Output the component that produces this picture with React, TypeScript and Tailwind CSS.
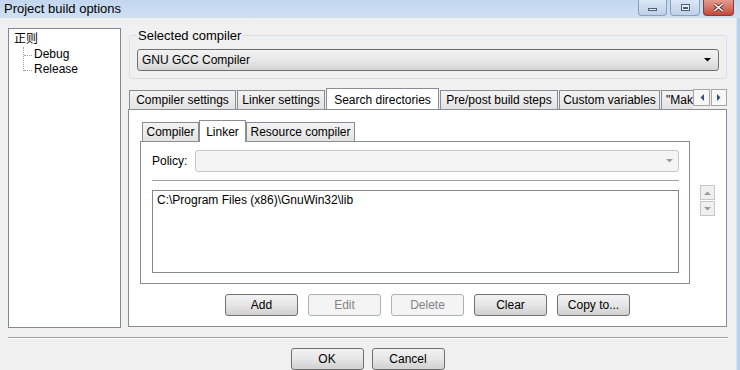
const font = { fontFamily: "'Liberation Sans', Arial, sans-serif" };

const WinButton = ({
  label,
  disabled,
}: {
  label: string;
  disabled?: boolean;
}) => (
  <button
    className={
      disabled
        ? "w-[73px] h-[22px] rounded-[3px] border border-[#adb2b5] bg-[#f4f4f4] text-[#838383] text-[12px] leading-none"
        : "w-[73px] h-[22px] rounded-[3px] border border-[#707070] bg-gradient-to-b from-[#f2f2f2] via-[#e6e6e6] to-[#d0d0d0] text-black text-[12px] leading-none"
    }
  >
    {label}
  </button>
);

const outerTabs = [
  { name: "Compiler settings", w: "w-[107px]" },
  { name: "Linker settings", w: "w-[88px]" },
  { name: "Search directories", w: "w-[113px]", active: true },
  { name: "Pre/post build steps", w: "w-[118px]" },
  { name: "Custom variables", w: "w-[101px]" },
  { name: '"Make" commands', w: "w-[110px]" },
];

const innerTabs = [
  { name: "Compiler", w: "w-[57px]" },
  { name: "Linker", w: "w-[47px]", active: true },
  { name: "Resource compiler", w: "w-[109px]" },
];

const Tab = ({
  name,
  w,
  active,
}: {
  name: string;
  w: string;
  active?: boolean;
}) => (
  <div
    className={
      active
        ? `${w} h-[22px] -mb-px relative z-10 shrink-0 bg-white border border-b-0 border-[#898c95] flex items-start pt-[2px] justify-center text-[12px] whitespace-nowrap`
        : `${w} h-[19px] shrink-0 bg-gradient-to-b from-[#f3f3f3] to-[#e3e3e3] border border-b-0 border-[#898c95] flex items-center justify-center text-[12px] whitespace-nowrap`
    }
  >
    {name}
  </div>
);

const Arrow = ({ dir, color }: { dir: "up" | "down" | "left" | "right"; color: string }) => {
  const pts = {
    up: "0,4 3.5,0.5 7,4",
    down: "0,0 7,0 3.5,3.5",
    left: "4,0 4,7 0.5,3.5",
    right: "0,0 0,7 3.5,3.5",
  }[dir];
  const vertical = dir === "up" || dir === "down";
  return (
    <svg width={vertical ? 7 : 4} height={vertical ? 4 : 7} viewBox={vertical ? "0 0 7 4" : "0 0 4 7"}>
      <polygon points={pts} fill={color} />
    </svg>
  );
};

export default function App() {
  return (
    <div
      className="w-[740px] h-[370px] overflow-hidden flex flex-col bg-[#f0f0f0] text-black"
      style={font}
    >
      {/* title bar */}
      <div className="h-[18px] shrink-0 flex items-start bg-gradient-to-b from-[#c2d7ee] to-[#cfe0f3]">
        <div className="pl-[4px] pt-[1px] text-[13px] leading-[16px] text-black">
          Project build options
        </div>
        <div className="ml-auto flex gap-[3px] mr-[6px]">
          <div className="w-[29px] h-[16px] rounded-b-[4px] border border-t-0 border-[#8aa1bd] bg-gradient-to-b from-[#dbe7f4] to-[#bdd1e8] flex items-center justify-center">
            <div className="w-[9px] h-[3px] mt-[3px] border border-[#4d5f78] bg-[#e9eef4]" />
          </div>
          <div className="w-[30px] h-[16px] rounded-b-[4px] border border-t-0 border-[#8aa1bd] bg-gradient-to-b from-[#dbe7f4] to-[#bdd1e8] flex items-center justify-center">
            <div className="w-[9px] h-[7px] border border-[#4d5f78] bg-[#e9eef4] flex items-center justify-center">
              <div className="w-[5px] h-[2px] bg-[#4d5f78]" />
            </div>
          </div>
          <div className="w-[31px] h-[16px] rounded-b-[4px] border border-t-0 border-[#8b3a36] bg-gradient-to-b from-[#e39a8e] to-[#c4493c] flex items-center justify-center">
            <svg width="11" height="9" viewBox="0 0 11 9">
              <path d="M1.5 1 L9.5 8 M9.5 1 L1.5 8" stroke="#4a2a28" strokeWidth="3" />
              <path d="M1.5 1 L9.5 8 M9.5 1 L1.5 8" stroke="#ffffff" strokeWidth="1.6" />
            </svg>
          </div>
        </div>
      </div>

      <div className="flex flex-1">
        <div className="w-[736px] flex flex-col">
          <div className="flex pt-[10px] pl-[8px]">
            {/* tree */}
            <div className="w-[113px] h-[300px] bg-white border border-[#828790] relative">
              <div
                className="ml-[4px] mt-[3px] text-[12px] leading-[15px] px-[1px]"
                style={{ fontFamily: "'Liberation Sans', 'Noto Sans CJK SC', sans-serif" }}
              >
                正则
              </div>
              <div className="flex">
                <div className="ml-[14px] w-[10px] h-[24px] border-l border-dotted border-[#a0a0a0] relative">
                  <div className="absolute left-0 top-[8px] w-[8px] border-t border-dotted border-[#a0a0a0]" />
                  <div className="absolute left-0 top-[23px] w-[8px] border-t border-dotted border-[#a0a0a0]" />
                </div>
                <div className="text-[12px] leading-[15px] pl-[1px]">
                  <div>Debug</div>
                  <div>Release</div>
                </div>
              </div>
            </div>

            {/* right column */}
            <div className="ml-[7px] w-[599px] flex flex-col">
              <fieldset className="ml-[1px] border border-[#d5dfe5] rounded-[3px] px-[7px] pb-[7px]">
                <legend className="text-[13px] leading-[15px] px-[1px] ml-[0px]">Selected compiler</legend>
                <div className="mt-[6px] h-[22px] w-[582px] rounded-[3px] border border-[#707070] bg-gradient-to-b from-[#f2f2f2] via-[#e8e8e8] to-[#d5d5d5] flex items-center pl-[4px] pr-[7px] text-[12px]">
                  GNU GCC Compiler
                  <span className="ml-auto">
                    <Arrow dir="down" color="#000000" />
                  </span>
                </div>
              </fieldset>

              {/* outer tabs */}
              <div className="mt-[9px] flex items-end h-[21px] pl-[1px]">
                <div className="w-[564px] flex items-end overflow-hidden gap-[1px]">
                  {outerTabs.map((t) => (
                    <Tab key={t.name} {...t} />
                  ))}
                </div>
                <div className="flex gap-[1px] self-start mt-[1px]">
                  <div className="w-[17px] h-[17px] border border-[#a6a6a6] bg-[#f7f7f7] flex items-center justify-center">
                    <Arrow dir="left" color="#3b4f7a" />
                  </div>
                  <div className="w-[16px] h-[17px] border border-[#a6a6a6] bg-[#f7f7f7] flex items-center justify-center">
                    <Arrow dir="right" color="#3b4f7a" />
                  </div>
                </div>
              </div>

              {/* outer panel */}
              <div className="w-[599px] h-[218px] bg-white border border-[#898c95] flex flex-col pl-[11px] pt-[8px]">
                <div className="flex">
                  <div className="w-[550px] flex flex-col">
                    <div className="flex items-end h-[23px] pl-[2px]">
                      {innerTabs.map((t) => (
                        <Tab key={t.name} {...t} />
                      ))}
                    </div>
                    <div className="h-[143px] border border-[#898c95] flex flex-col pl-[11px] pr-[10px] pt-[8px]">
                      <div className="flex items-center h-[22px]">
                        <span className="text-[12px] w-[43px]">Policy:</span>
                        <div className="flex-1 h-[22px] rounded-[3px] border border-[#c6c6c6] bg-[#f4f4f4] flex items-center justify-end pr-[5px]">
                          <Arrow dir="down" color="#9a9a9a" />
                        </div>
                      </div>
                      <div className="mt-[8px] border-t border-[#a0a0a0]" />
                      <div className="mt-[9px] h-[83px] border border-[#828790] bg-white px-[4px] pt-[2px] text-[12px] leading-[15px]">
                        C:\Program Files (x86)\GnuWin32\lib
                      </div>
                    </div>
                  </div>
                  <div className="ml-[10px] mt-[67px] flex flex-col gap-[1px]">
                    <div className="w-[15px] h-[15px] border border-[#c6c6c6] bg-[#efefef] flex items-center justify-center">
                      <Arrow dir="up" color="#9a9a9a" />
                    </div>
                    <div className="w-[15px] h-[15px] border border-[#c6c6c6] bg-[#efefef] flex items-center justify-center">
                      <Arrow dir="down" color="#9a9a9a" />
                    </div>
                  </div>
                </div>
                <div className="mt-[10px] flex justify-center gap-[10px] pr-[11px]">
                  <WinButton label="Add" />
                  <WinButton label="Edit" disabled />
                  <WinButton label="Delete" disabled />
                  <WinButton label="Clear" />
                  <WinButton label="Copy to..." />
                </div>
              </div>
            </div>
          </div>

          {/* bottom */}
          <div className="mt-[9px] ml-[8px] w-[720px] border-t border-[#a0a0a0] border-b-white border-b" />
          <div className="mt-[9px] w-[735px] flex justify-center gap-[8px]">
            <WinButton label="OK" />
            <WinButton label="Cancel" />
          </div>
        </div>
        <div className="w-[4px] bg-[#b9d1ea] border-l border-[#d7e4f2]" />
      </div>
    </div>
  );
}
